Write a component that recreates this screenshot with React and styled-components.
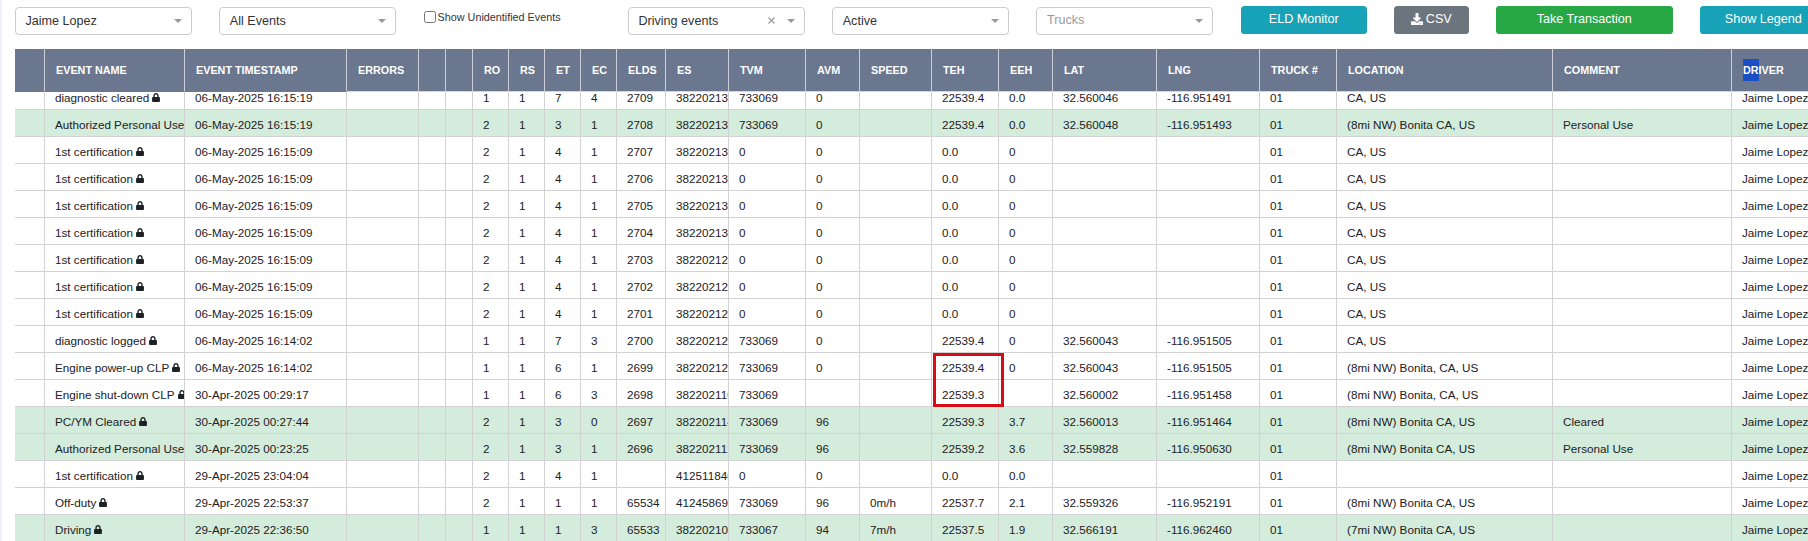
import React from "react";
import styled, { createGlobalStyle } from "styled-components";
import { FaLock, FaDownload } from "react-icons/fa";

const GlobalStyle = createGlobalStyle`
  html, body { margin: 0; padding: 0; background: #fff; overflow: hidden; }
  * { box-sizing: border-box; }
`;

const Page = styled.div`
  position: relative;
  width: 1808px;
  height: 541px;
  overflow: hidden;
  background: #fff;
  border-left: 2px solid #f0f0f8;
  padding-left: 13px;
  font-family: "Liberation Sans", Arial, sans-serif;
  color: #1d2024;
`;

const Toolbar = styled.div`
  display: flex;
  align-items: flex-start;
  gap: 27.5px;
  height: 49px;
  width: 1900px;
`;

const Select = styled.div`
  flex: 0 0 176.8px;
  height: 28px;
  margin-top: 7px;
  padding: 0 9px 1px 9.5px;
  display: flex;
  align-items: center;
  gap: 9px;
  border: 1px solid #ccc;
  border-radius: 4px;
  background: #fff;
  font-size: 12.6px;
  color: ${(p) => (p.$placeholder ? "#9a9a9a" : "#333")};
`;

const SelectValue = styled.span`
  flex: 1;
  white-space: nowrap;
  margin-bottom: ${(p) => (p.$raised ? "2px" : "0")};
`;

const ClearMark = styled.svg`
  width: 7px;
  height: 7px;
  margin-right: 3px;
  stroke: #999;
  stroke-width: 1.1;
  fill: none;
`;

const Caret = styled.span`
  width: 0;
  height: 0;
  border-left: 4px solid transparent;
  border-right: 4px solid transparent;
  border-top: 4px solid #999;
`;

const CheckField = styled.label`
  flex: 0 0 176.8px;
  margin-top: 10px;
  display: flex;
  align-items: center;
  gap: 2px;
  font-size: 10.8px;
  color: #333;
  white-space: nowrap;
`;

const CheckBox = styled.input`
  width: 12px;
  height: 12px;
  margin: 0;
`;

const CheckText = styled.span`
  padding-top: 1px;
`;

const Button = styled.button`
  flex: 0 0 ${(p) => p.$width}px;
  margin-top: 6px;
  height: 28px;
  padding: 0 0 3px;
  border: none;
  border-radius: 3.6px;
  background: ${(p) => p.$bg};
  color: #fff;
  font-family: inherit;
  font-size: 12.6px;
  display: flex;
  align-items: center;
  justify-content: center;
  gap: 3px;
  white-space: nowrap;
`;

const ButtonGroup = styled.div`
  display: flex;
  gap: 27px;
`;

const Table = styled.table`
  table-layout: fixed;
  border-collapse: separate;
  border-spacing: 0;
  width: 1807px;
`;

const HeadCell = styled.th`
  height: 43px;
  padding: 0 0 1px 11px;
  background: #6a778f;
  color: #fff;
  font-size: 10.8px;
  font-weight: 700;
  text-align: left;
  white-space: nowrap;
  overflow: hidden;
  border-right: 1px solid #c9ced8;
  border-bottom: 1px solid ${(p) => (p.$frozen ? "#6a778f" : "#d4d7dd")};
`;

const Picked = styled.span`
  display: inline-block;
  line-height: 22px;
  background: #1a4fc4;
`;

const BodyClip = styled.div`
  height: 449px;
  overflow: hidden;
`;

const BodyTable = styled(Table)`
  margin-top: -9px;
`;

const Row = styled.tr`
  background: ${(p) => (p.$green ? "#d4ecdb" : "#fff")};
`;

const Cell = styled.td`
  height: 27px;
  padding: 2px 0 0 10px;
  font-size: 11.7px;
  white-space: nowrap;
  overflow: hidden;
  border-right: 1px solid #d2d2d2;
  border-bottom: 1px solid #d2d2d2;
`;

const LockIcon = styled(FaLock)`
  width: 8px;
  height: 9px;
  margin-left: 3px;
  color: #1d2024;
  vertical-align: -0.5px;
`;

const Highlight = styled.div`
  position: absolute;
  left: 931px;
  top: 353px;
  width: 71px;
  height: 54px;
  border: 3px solid #d60d15;
  pointer-events: none;
`;

const widths = [30, 140, 162, 72, 27, 27, 36, 36, 36, 36, 49, 63, 77, 54, 72, 67, 54, 104, 103, 77, 216, 179, 90];

const Columns = () => (
  <colgroup>
    {widths.map((w, i) => (
      <col key={i} style={{ width: w }} />
    ))}
  </colgroup>
);

const heads = ["", "EVENT NAME", "EVENT TIMESTAMP", "ERRORS", "", "", "RO", "RS", "ET", "EC", "ELDS", "ES", "TVM", "AVM", "SPEED", "TEH", "EEH", "LAT", "LNG", "TRUCK #", "LOCATION", "COMMENT"];

const cert = (elds, es) => ["1st certification", "06-May-2025 16:15:09", 2, 1, 4, 1, elds, es, "0", "0", "", "0.0", "0", "", "", "CA, US", "", false];

const rows = [
  ["diagnostic cleared", "06-May-2025 16:15:19", 1, 1, 7, 4, "2709", "382202137", "733069", "0", "", "22539.4", "0.0", "32.560046", "-116.951491", "CA, US", "", false],
  ["Authorized Personal Use", "06-May-2025 16:15:19", 2, 1, 3, 1, "2708", "382202137", "733069", "0", "", "22539.4", "0.0", "32.560048", "-116.951493", "(8mi NW) Bonita CA, US", "Personal Use", true],
  cert("2707", "382202137"),
  cert("2706", "382202137"),
  cert("2705", "382202137"),
  cert("2704", "382202137"),
  cert("2703", "382202127"),
  cert("2702", "382202127"),
  cert("2701", "382202127"),
  ["diagnostic logged", "06-May-2025 16:14:02", 1, 1, 7, 3, "2700", "382202127", "733069", "0", "", "22539.4", "0", "32.560043", "-116.951505", "CA, US", "", false],
  ["Engine power-up CLP", "06-May-2025 16:14:02", 1, 1, 6, 1, "2699", "382202127", "733069", "0", "", "22539.4", "0", "32.560043", "-116.951505", "(8mi NW) Bonita, CA, US", "", false],
  ["Engine shut-down CLP", "30-Apr-2025 00:29:17", 1, 1, 6, 3, "2698", "382202110", "733069", "", "", "22539.3", "", "32.560002", "-116.951458", "(8mi NW) Bonita, CA, US", "", false],
  ["PC/YM Cleared", "30-Apr-2025 00:27:44", 2, 1, 3, 0, "2697", "382202114", "733069", "96", "", "22539.3", "3.7", "32.560013", "-116.951464", "(8mi NW) Bonita CA, US", "Cleared", true],
  ["Authorized Personal Use", "30-Apr-2025 00:23:25", 2, 1, 3, 1, "2696", "382202112", "733069", "96", "", "22539.2", "3.6", "32.559828", "-116.950630", "(8mi NW) Bonita CA, US", "Personal Use", true],
  ["1st certification", "29-Apr-2025 23:04:04", 2, 1, 4, 1, "", "412511840", "0", "0", "", "0.0", "0.0", "", "", "", "", false],
  ["Off-duty", "29-Apr-2025 22:53:37", 2, 1, 1, 1, "65534", "412458697", "733069", "96", "0m/h", "22537.7", "2.1", "32.559326", "-116.952191", "(8mi NW) Bonita CA, US", "", false],
  ["Driving", "29-Apr-2025 22:36:50", 1, 1, 1, 3, "65533", "382202107", "733067", "94", "7m/h", "22537.5", "1.9", "32.566191", "-116.962460", "(7mi NW) Bonita CA, US", "", true],
];

const Dropdown = ({ value, placeholder, clearable }) => (
  <Select $placeholder={placeholder}>
    <SelectValue $raised={placeholder}>{value}</SelectValue>
    {clearable && (
      <ClearMark viewBox="0 0 7 7">
        <path d="M0.5 0.5 L6.5 6.5 M6.5 0.5 L0.5 6.5" />
      </ClearMark>
    )}
    <Caret />
  </Select>
);

export default function App() {
  return (
    <Page>
      <GlobalStyle />
      <Toolbar>
        <Dropdown value="Jaime Lopez" />
        <Dropdown value="All Events" />
        <CheckField>
          <CheckBox type="checkbox" />
          <CheckText>Show Unidentified Events</CheckText>
        </CheckField>
        <Dropdown value="Driving events" clearable />
        <Dropdown value="Active" />
        <Dropdown value="Trucks" placeholder />
        <ButtonGroup>
          <Button $width={126} $bg="#17a2b8">ELD Monitor</Button>
          <Button $width={75} $bg="#6c757d"><FaDownload size={12} /> CSV</Button>
          <Button $width={177} $bg="#28a745">Take Transaction</Button>
          <Button $width={127} $bg="#17a2b8">Show Legend</Button>
        </ButtonGroup>
      </Toolbar>
      <Table>
        <Columns />
        <thead>
          <tr>
            {heads.map((h, i) => (
              <HeadCell key={i} $frozen={i < 3}>{h}</HeadCell>
            ))}
            <HeadCell><Picked>DR</Picked>IVER</HeadCell>
          </tr>
        </thead>
      </Table>
      <BodyClip>
        <BodyTable>
          <Columns />
          <tbody>
            {rows.map((r, i) => (
              <Row key={i} $green={r[17]}>
                <Cell />
                <Cell>{r[0]}<LockIcon /></Cell>
                <Cell>{r[1]}</Cell>
                <Cell />
                <Cell />
                <Cell />
                <Cell>{r[2]}</Cell>
                <Cell>{r[3]}</Cell>
                <Cell>{r[4]}</Cell>
                <Cell>{r[5]}</Cell>
                <Cell>{r[6]}</Cell>
                <Cell>{r[7]}</Cell>
                <Cell>{r[8]}</Cell>
                <Cell>{r[9]}</Cell>
                <Cell>{r[10]}</Cell>
                <Cell>{r[11]}</Cell>
                <Cell>{r[12]}</Cell>
                <Cell>{r[13]}</Cell>
                <Cell>{r[14]}</Cell>
                <Cell>01</Cell>
                <Cell>{r[15]}</Cell>
                <Cell>{r[16]}</Cell>
                <Cell>Jaime Lopez</Cell>
              </Row>
            ))}
          </tbody>
        </BodyTable>
      </BodyClip>
      <Highlight />
    </Page>
  );
}
